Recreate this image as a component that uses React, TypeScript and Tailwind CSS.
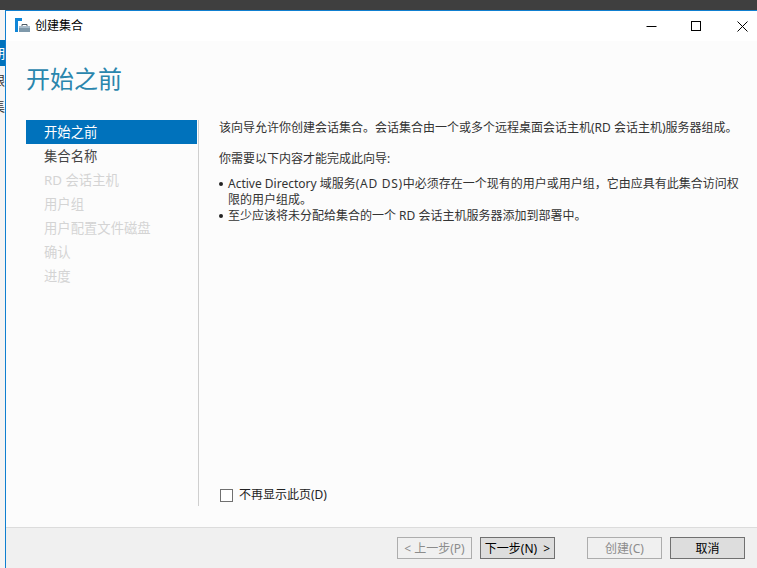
import React from "react";

const font = { fontFamily: '"Noto Sans", "Noto Sans CJK SC", sans-serif' };

function Btn({ children, disabled, className = "" }: { children: React.ReactNode; disabled?: boolean; className?: string }) {
  return (
    <div
      className={
        "w-[75px] h-[22px] pt-px flex items-center justify-center text-[12px] whitespace-pre border " +
        (disabled ? "border-[#adadad] text-[#8c8c8c] bg-[#f0f0f0] " : "border-[#707070] text-black bg-[#dddddd] ") +
        className
      }
    >
      {children}
    </div>
  );
}

export default function App() {
  const nav = ["RD 会话主机", "用户组", "用户配置文件磁盘", "确认", "进度"];
  return (
    <div className="w-[757px] h-[568px] overflow-hidden flex flex-col bg-[#3f3f3f]" style={font}>
      <div className="h-[10px] shrink-0 bg-[#3f3f3f]" />
      <div className="flex flex-1 min-h-0">
        <div className="w-[5px] shrink-0 bg-[#f4f4f4] flex flex-col overflow-hidden text-[13px] leading-[26px] text-[#333]">
          <div className="h-[30px] shrink-0" />
          <div className="h-[26px] shrink-0 bg-[#0072bc] text-white flex justify-end whitespace-nowrap"><span>期</span></div>
          <div className="h-[28px] shrink-0 flex items-center justify-end whitespace-nowrap"><span>眼</span></div>
          <div className="h-[24px] shrink-0 flex items-center justify-end whitespace-nowrap"><span>集</span></div>
        </div>
        <div className="flex-1 min-w-0 flex flex-col bg-[#fcfcfc] border-l border-t border-[#0f7fd0]">
          {/* title bar */}
          <div className="h-[30px] shrink-0 bg-white flex items-center">
            <svg width="15" height="15" viewBox="0 0 15 15" className="ml-[9px] mb-[1px]">
              <rect x="0" y="0" width="7" height="3" fill="#0f86d8" />
              <rect x="0" y="3" width="3" height="11" fill="#0f86d8" />
              <rect x="4" y="8" width="11" height="6" fill="#7f99ab" />
              <rect x="4" y="8" width="11" height="2" fill="#a9bccb" />
              <path d="M7 8V6.5h5V8" fill="none" stroke="#4d5b66" strokeWidth="1" />
            </svg>
            <span className="ml-[5px] text-[12px] text-black leading-none">创建集合</span>
            <div className="ml-auto flex items-center">
              <svg width="11" height="11" viewBox="0 0 11 11" className="mr-[34px]"><path d="M0.5 5.5H10.5" stroke="#000" fill="none" /></svg>
              <svg width="10" height="10" viewBox="0 0 10 10" className="mr-[36px]"><rect x="0.5" y="0.5" width="9" height="9" stroke="#000" fill="none" /></svg>
              <svg width="11" height="11" viewBox="0 0 11 11" className="mr-[9px]"><path d="M0.5 0.5L10.5 10.5M10.5 0.5L0.5 10.5" stroke="#000" fill="none" /></svg>
            </div>
          </div>
          {/* heading */}
          <div className="h-[79px] shrink-0 pl-[20px] pt-[22px] text-[24px] leading-[32px] text-[#2a86ad]">开始之前</div>
          {/* body */}
          <div className="flex flex-1 min-h-0 pb-[21px]">
            <div className="w-[171px] mr-px shrink-0 ml-[20px] text-[13.33px] leading-[24px]">
              <div className="h-[24px] bg-[#0072bc] text-white pl-[18px]">开始之前</div>
              <div className="h-[24px] text-[#444] pl-[18px]">集合名称</div>
              {nav.map((n) => (
                <div key={n} className="h-[24px] text-[#d4d4d4] pl-[18px]">{n}</div>
              ))}
            </div>
            <div className="w-px shrink-0 bg-[#cfcfcf]" />
            <div className="flex-1 min-w-0 flex flex-col pl-[20px] pr-[15px] text-[12px] text-[#333] leading-[16px]">
              <p className="whitespace-nowrap">该向导允许你创建会话集合。会话集合由一个或多个远程桌面会话主机(RD 会话主机)服务器组成。</p>
              <p className="mt-[15px]">你需要以下内容才能完成此向导:</p>
              <ul className="mt-[9px]">
                <li className="flex">
                  <span className="w-[4px] h-[4px] rounded-full bg-[#222] shrink-0 mt-[6px] mr-[5px]" />
                  <span>Active Directory 域服务<span className="tracking-[0.7px]">(AD DS)</span>中必须存在一个现有的用户或用户组，它由应具有此集合访问权限的用户组成。</span>
                </li>
                <li className="flex">
                  <span className="w-[4px] h-[4px] rounded-full bg-[#222] shrink-0 mt-[6px] mr-[5px]" />
                  <span>至少应该将未分配给集合的一个 RD 会话主机服务器添加到部署中。</span>
                </li>
              </ul>
              <div className="mt-auto mb-[3px] ml-px flex items-center">
                <div className="w-[13px] h-[13px] border border-[#707070] bg-white mr-[6px]" />
                <span className="text-[#222]">不再显示此页(D)</span>
              </div>
            </div>
          </div>
          {/* footer */}
          <div className="h-[41px] shrink-0 bg-[#f0f0f0] border-t border-[#dcdcdc] flex items-start pt-[9px] pl-[391px]">
            <Btn disabled>&lt; 上一步(P)</Btn>
            <Btn className="ml-[8px]">下一步(N)  &gt;</Btn>
            <Btn disabled className="ml-[32px]">创建(C)</Btn>
            <Btn className="ml-[8px]">取消</Btn>
          </div>
        </div>
      </div>
    </div>
  );
}
